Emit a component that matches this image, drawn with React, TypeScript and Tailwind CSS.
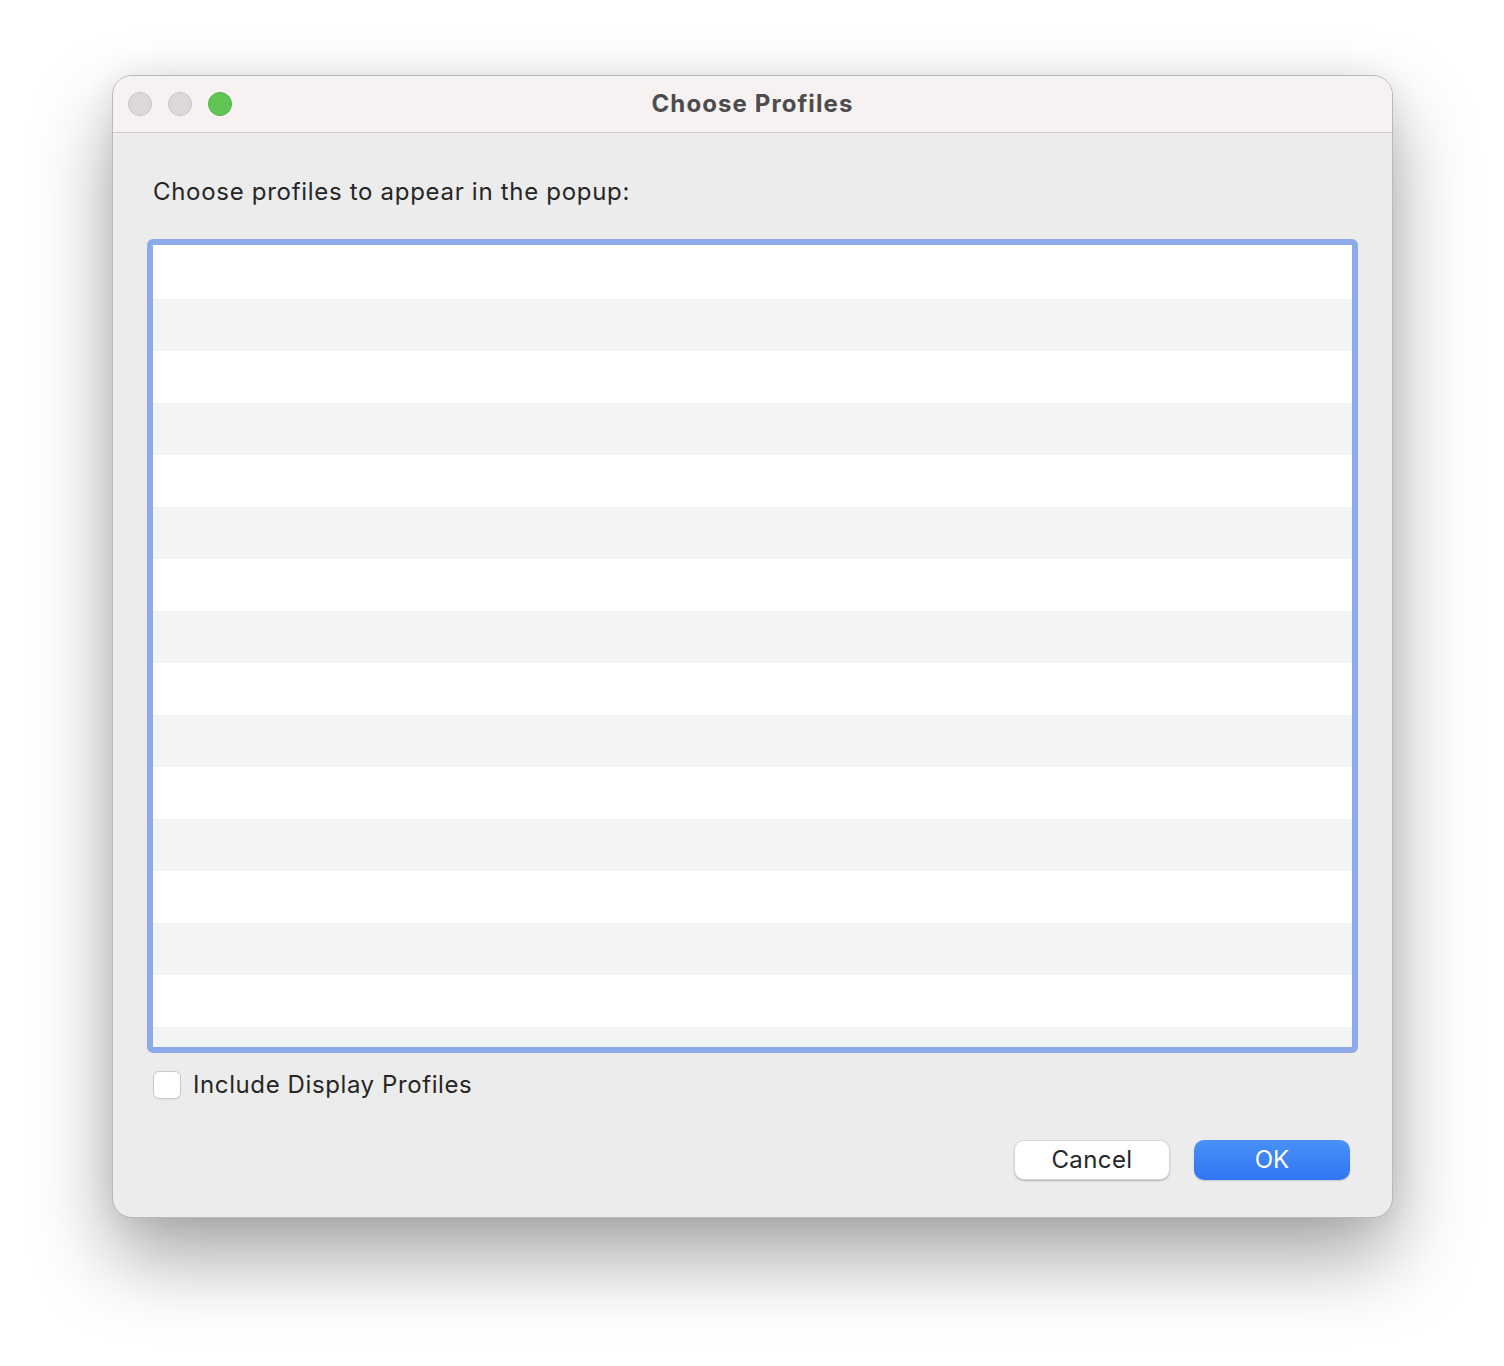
export default function App() {
  const rows = Array.from({ length: 16 }, (_, i) => i);

  return (
    <div className="min-h-[1366px] bg-white pt-[75px] pl-[112px] font-['Inter','Liberation_Sans',sans-serif]">
      {/* Window */}
      <div className="w-[1281px] h-[1143px] rounded-[20px] bg-[#ececec] border border-[#b9b9b9] shadow-[0_40px_80px_rgba(0,0,0,0.35),0_0_30px_rgba(0,0,0,0.08)] overflow-hidden flex flex-col">
        {/* Title bar */}
        <div className="relative h-[57px] shrink-0 bg-[#f5f2f1] border-b border-[#cfcccb] flex items-center">
          <div className="flex items-center gap-4 pl-[15px]">
            <span className="w-6 h-6 rounded-full bg-[#dcd9d8] border border-[#c6c3c2]" />
            <span className="w-6 h-6 rounded-full bg-[#dcd9d8] border border-[#c6c3c2]" />
            <span className="w-6 h-6 rounded-full bg-[#61c554] border border-[#54b048]" />
          </div>
          <div className="absolute inset-0 flex items-center justify-center text-[24px] font-bold tracking-[1.1px] text-[#4c4c4c] pointer-events-none">
            Choose Profiles
          </div>
        </div>

        {/* Body */}
        <div className="flex-1 flex flex-col px-[34px]">
          <p className="pl-[6px] pt-[44px] text-[24px] leading-[30px] text-[#262626] tracking-[0.7px]">
            Choose profiles to appear in the popup:
          </p>

          <div className="mt-[32px] h-[814px] rounded-[6px] border-[6px] border-[#8eaaeb] bg-white overflow-hidden">
            <div className="pt-[2px]">
              {rows.map((r) => (
                <div
                  key={r}
                  className={r % 2 === 0 ? "h-[52px] bg-white" : "h-[52px] bg-[#f3f4f4]"}
                />
              ))}
            </div>
          </div>

          <label className="mt-[14px] flex items-center gap-3 pl-[6px]">
            <span className="w-7 h-7 rounded-[6px] bg-white border border-[#c9c9c9] shadow-[0_1px_1px_rgba(0,0,0,0.05)]" />
            <span className="text-[24px] text-[#262626] tracking-[0.6px]">Include Display Profiles</span>
          </label>

          <div className="mt-[37px] flex justify-end gap-6 pr-[8px]">
            <button className="w-[156px] h-10 rounded-[10px] bg-white border border-[#d6d6d6] shadow-[0_1px_1.5px_rgba(0,0,0,0.25)] text-[24px] tracking-[0.4px] text-[#262626]">
              Cancel
            </button>
            <button className="w-[156px] h-10 rounded-[10px] bg-gradient-to-b from-[#4a90f6] to-[#2f76f5] shadow-[0_1px_1.5px_rgba(0,0,0,0.15)] text-[24px] text-white">
              OK
            </button>
          </div>
        </div>
      </div>
    </div>
  );
}
